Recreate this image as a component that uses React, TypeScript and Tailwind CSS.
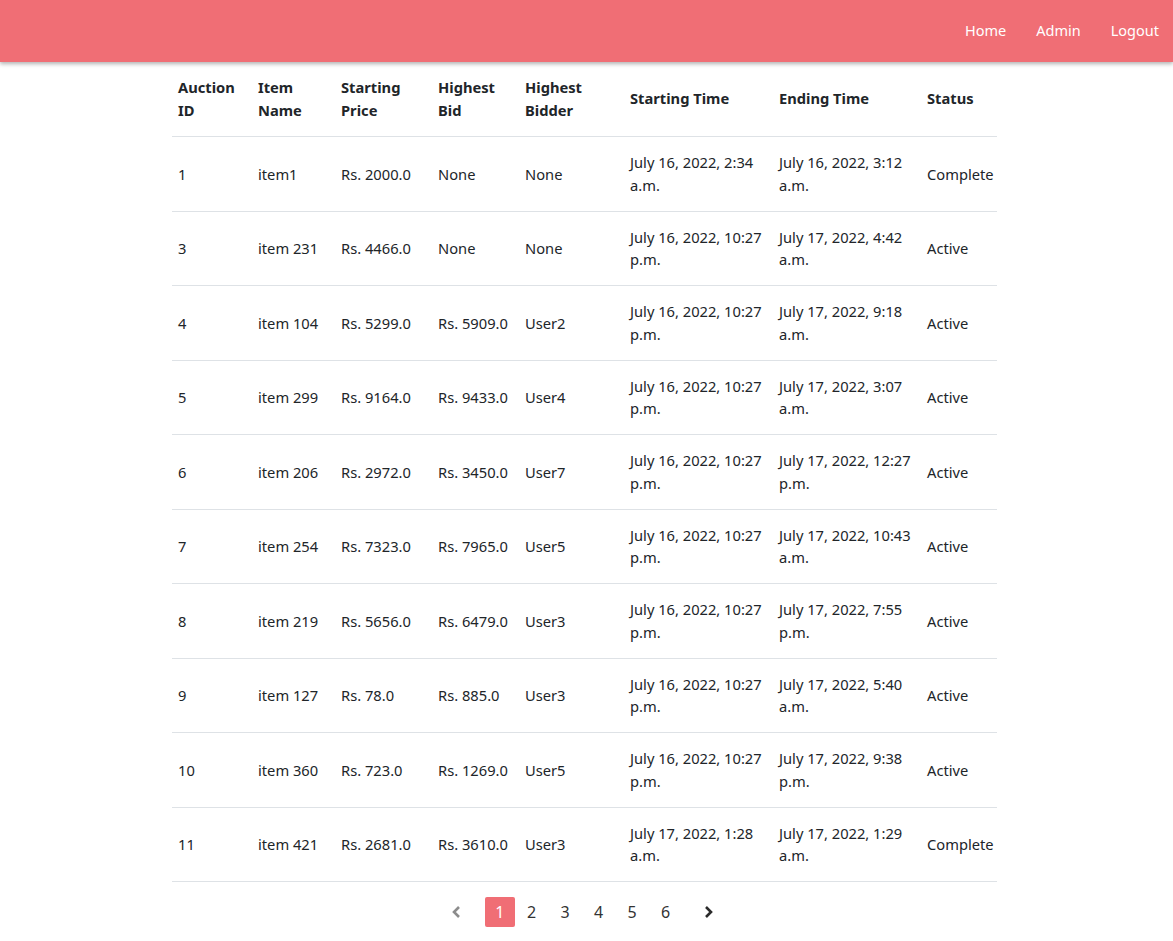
import React from "react";

// Filas de la tabla de subastas
const AUCTIONS = [
  { id: "1", item: "item1", start: "Rs. 2000.0", bid: "None", bidder: "None", st: "July 16, 2022, 2:34 a.m.", et: "July 16, 2022, 3:12 a.m.", status: "Complete" },
  { id: "3", item: "item 231", start: "Rs. 4466.0", bid: "None", bidder: "None", st: "July 16, 2022, 10:27 p.m.", et: "July 17, 2022, 4:42 a.m.", status: "Active" },
  { id: "4", item: "item 104", start: "Rs. 5299.0", bid: "Rs. 5909.0", bidder: "User2", st: "July 16, 2022, 10:27 p.m.", et: "July 17, 2022, 9:18 a.m.", status: "Active" },
  { id: "5", item: "item 299", start: "Rs. 9164.0", bid: "Rs. 9433.0", bidder: "User4", st: "July 16, 2022, 10:27 p.m.", et: "July 17, 2022, 3:07 a.m.", status: "Active" },
  { id: "6", item: "item 206", start: "Rs. 2972.0", bid: "Rs. 3450.0", bidder: "User7", st: "July 16, 2022, 10:27 p.m.", et: "July 17, 2022, 12:27 p.m.", status: "Active" },
  { id: "7", item: "item 254", start: "Rs. 7323.0", bid: "Rs. 7965.0", bidder: "User5", st: "July 16, 2022, 10:27 p.m.", et: "July 17, 2022, 10:43 a.m.", status: "Active" },
  { id: "8", item: "item 219", start: "Rs. 5656.0", bid: "Rs. 6479.0", bidder: "User3", st: "July 16, 2022, 10:27 p.m.", et: "July 17, 2022, 7:55 p.m.", status: "Active" },
  { id: "9", item: "item 127", start: "Rs. 78.0", bid: "Rs. 885.0", bidder: "User3", st: "July 16, 2022, 10:27 p.m.", et: "July 17, 2022, 5:40 a.m.", status: "Active" },
  { id: "10", item: "item 360", start: "Rs. 723.0", bid: "Rs. 1269.0", bidder: "User5", st: "July 16, 2022, 10:27 p.m.", et: "July 17, 2022, 9:38 p.m.", status: "Active" },
  { id: "11", item: "item 421", start: "Rs. 2681.0", bid: "Rs. 3610.0", bidder: "User3", st: "July 17, 2022, 1:28 a.m.", et: "July 17, 2022, 1:29 a.m.", status: "Complete" },
];

const HEADERS = [
  { label: "Auction ID", w: "w-[80px]" },
  { label: "Item Name", w: "w-[83px]" },
  { label: "Starting Price", w: "w-[97px]" },
  { label: "Highest Bid", w: "w-[87px]" },
  { label: "Highest Bidder", w: "w-[105px]" },
  { label: "Starting Time", w: "w-[149px]" },
  { label: "Ending Time", w: "w-[148px]" },
  { label: "Status", w: "w-[76px]" },
];

const Chevron = ({ dir, className }: { dir: "left" | "right"; className?: string }) => (
  <svg width="12" height="14" viewBox="0 0 12 14" className={className}>
    <polyline
      points={dir === "left" ? "8,2 3,7 8,12" : "4,2 9,7 4,12"}
      fill="none"
      stroke="currentColor"
      strokeWidth="2.6"
    />
  </svg>
);

export default function App() {
  const cell = "px-[6px] py-[14.25px] align-middle";

  return (
    <div className="min-h-screen bg-white text-[#212529] text-[14.7px] leading-[22.5px] font-['Noto_Sans','Open_Sans',sans-serif]">
      {/* Barra de navegación */}
      <nav className="h-[62px] bg-[#f06e75] shadow-[0_2px_4px_rgba(0,0,0,0.3)] flex items-center justify-end pr-[14px] pb-[2px] gap-[30px] text-white text-[14.5px]">
        <a className="cursor-pointer">Home</a>
        <a className="cursor-pointer">Admin</a>
        <a className="cursor-pointer">Logout</a>
      </nav>

      <div className="w-[825px] ml-[172px] mt-[5px]">
        <table className="w-full table-fixed border-collapse text-left">
          <thead>
            <tr className="border-b border-[#dee2e6]">
              {HEADERS.map((h) => (
                <th key={h.label} className={`${h.w} px-[6px] pt-[9px] pb-[15px] font-bold align-middle`}>
                  {h.label}
                </th>
              ))}
            </tr>
          </thead>
          <tbody>
            {AUCTIONS.map((a) => (
              <tr key={a.id} className="border-b border-[#dee2e6]">
                <td className={cell}>{a.id}</td>
                <td className={cell}>{a.item}</td>
                <td className={cell}>{a.start}</td>
                <td className={cell}>{a.bid}</td>
                <td className={cell}>{a.bidder}</td>
                <td className={cell}>{a.st}</td>
                <td className={cell}>{a.et}</td>
                <td className={`${cell} whitespace-nowrap`}>{a.status}</td>
              </tr>
            ))}
          </tbody>
        </table>

        {/* Paginación */}
        <div className="flex items-center justify-center mt-[15px] text-[16px] pr-[4px]">
          <Chevron dir="left" className="text-[#8c8c8c] mr-[22px]" />
          <span className="w-[30px] h-[30px] rounded-[2px] bg-[#f06e75] text-white flex items-center justify-center">1</span>
          {["2", "3", "4", "5", "6"].map((n) => (
            <span key={n} className="w-[33.5px] h-[30px] flex items-center justify-center text-[#333]">
              {n}
            </span>
          ))}
          <Chevron dir="right" className="text-[#2b2b2b] ml-[20px]" />
        </div>
      </div>
    </div>
  );
}
